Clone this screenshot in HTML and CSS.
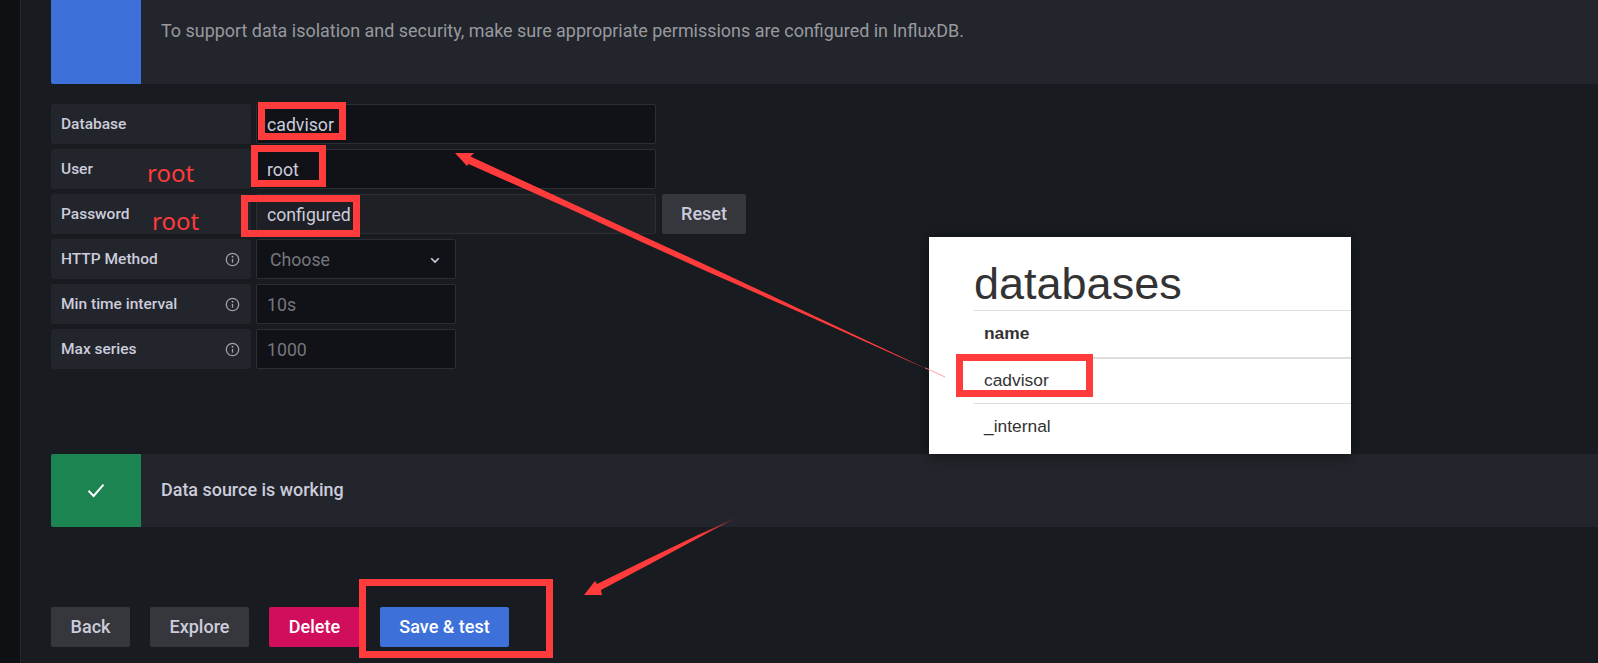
FILE: index.html
```html
<!DOCTYPE html>
<html lang="en">
<head>
<meta charset="utf-8">
<title>InfluxDB data source</title>
<link rel="stylesheet" href="styles.css">
</head>
<body>
<div class="page">
  <aside class="rail"></aside>
  <main class="main">
    <section class="alert alert-info">
      <div class="alert-icon icon-blue"></div>
      <p class="alert-note">To support data isolation and security, make sure appropriate permissions are configured in InfluxDB.</p>
    </section>

    <form class="form">
      <div class="row">
        <div class="label">Database</div>
        <div class="field wide">cadvisor</div>
      </div>
      <div class="row">
        <div class="label">User</div>
        <div class="field wide">root</div>
      </div>
      <div class="row">
        <div class="label">Password</div>
        <div class="field wide locked">configured</div>
        <div class="btn btn-grey btn-reset">Reset</div>
      </div>
      <div class="row">
        <div class="label">HTTP Method
          <svg class="info" viewBox="0 0 16 16"><circle cx="8" cy="8" r="6.6"/><path d="M8 7.4v4"/><circle class="dot" cx="8" cy="5" r="1"/></svg>
        </div>
        <div class="field short select"><span class="hint hint-select">Choose</span>
          <svg class="chev" viewBox="0 0 12 12"><path d="M2.2 4.2 6 8l3.8-3.8"/></svg>
        </div>
      </div>
      <div class="row">
        <div class="label">Min time interval
          <svg class="info" viewBox="0 0 16 16"><circle cx="8" cy="8" r="6.6"/><path d="M8 7.4v4"/><circle class="dot" cx="8" cy="5" r="1"/></svg>
        </div>
        <div class="field short"><span class="hint">10s</span></div>
      </div>
      <div class="row">
        <div class="label">Max series
          <svg class="info" viewBox="0 0 16 16"><circle cx="8" cy="8" r="6.6"/><path d="M8 7.4v4"/><circle class="dot" cx="8" cy="5" r="1"/></svg>
        </div>
        <div class="field short"><span class="hint">1000</span></div>
      </div>
    </form>

    <section class="alert alert-ok">
      <div class="alert-icon icon-green">
        <svg class="check" viewBox="0 0 20 20"><path d="M2.500 10.800 7.600 16 17.500 4.600"/></svg>
      </div>
      <p class="alert-title">Data source is working</p>
    </section>

    <div class="actions">
      <div class="btn btn-grey btn-back">Back</div>
      <div class="btn btn-grey btn-explore">Explore</div>
      <div class="btn btn-red btn-delete">Delete</div>
      <div class="btn btn-blue btn-save">Save &amp; test</div>
    </div>
  </main>

  <div class="card">
    <h2 class="card-title">databases</h2>
    <div class="card-row card-head">name</div>
    <div class="card-row card-first">cadvisor</div>
    <div class="card-row card-last">_internal</div>
  </div>

  <svg class="arrows" viewBox="0 0 1598 663">
    <defs>
      <linearGradient id="fade2" gradientUnits="userSpaceOnUse" x1="700" y1="0" x2="737" y2="0">
        <stop offset="0" stop-color="#ff3b3b"/>
        <stop offset="1" stop-color="#ff3b3b" stop-opacity=".3"/>
      </linearGradient>
    </defs>
    <path class="arrow-fill" d="M455 153H474L470.500 156.500 570 202.500 640 234.700 707 265.500 807 312.500 900 356.300 928 369.600 900 357.300 807 315.500 707 271.500 640 241.200 570 209 468.500 164 467 166Z"/>
    <path class="arrow-tail" d="M925 367.800 945 377"/>
    <path fill="url(#fade2)" d="M584 595H602L601 590 650 564 700 537 737 517.500 700 534 650 558 597 584 595 581Z"/>
  </svg>

  <div class="mark mark-db"></div>
  <div class="mark mark-user"></div>
  <div class="mark mark-pass"></div>
  <div class="mark mark-card"></div>
  <div class="mark mark-save"></div>
  <div class="note note-user">root</div>
  <div class="note note-pass">root</div>
</div>
</body>
</html>
```
FILE: styles.css
```css
* { box-sizing: border-box; }

html, body {
  margin: 0;
  height: 100%;
  overflow: hidden;
}

body {
  background: #181b1f;
  color: #ccccdc;
  font-family: Roboto, "Liberation Sans", sans-serif;
  font-size: 18px;
}

.page {
  position: relative;
  display: flex;
  width: 1598px;
  height: 663px;
  overflow: hidden;
}

.rail {
  flex: none;
  width: 21px;
  background: #0f1013;
  border-right: 1px solid #25272b;
}

.main {
  flex: 1;
  min-width: 0;
  padding-left: 30px;
}

/* alerts */
.alert {
  display: flex;
  background: #22252b;
  border-radius: 0 0 0 2px;
}

.alert-info { height: 84px; }

.alert-ok {
  height: 73px;
  margin-top: 85px;
  align-items: center;
  border-radius: 2px 0 0 2px;
}

.alert-icon {
  flex: none;
  display: flex;
  align-items: center;
  justify-content: center;
  width: 90px;
  align-self: stretch;
}

.icon-blue { background: #3d71d9; border-radius: 0 0 0 2px; }
.icon-green { background: #1b8450; border-radius: 2px 0 0 2px; }

.alert-note {
  margin: 20px 0 0 20px;
  font-size: 17.95px;
  line-height: 21px;
  color: #98999f;
}

.alert-title {
  margin: 0 0 1px 20px;
  font-size: 17.95px;
  font-weight: 500;
  line-height: 22px;
  color: #ccccdc;
}

.check {
  width: 20px;
  height: 20px;
  margin-bottom: 2px;
  fill: none;
  stroke: #fff;
  stroke-width: 2;
}

/* form */
.form {
  display: flex;
  flex-direction: column;
  gap: 5px;
  margin-top: 20px;
}

.row {
  display: flex;
  gap: 5px;
  height: 40px;
}

.label {
  display: flex;
  align-items: center;
  justify-content: space-between;
  flex: none;
  width: 200px;
  padding: 0 11px 0 10px;
  background: #22252b;
  border-radius: 3px;
  font-size: 15.5px;
  font-weight: 500;
  color: #ccccdc;
}

.field {
  display: flex;
  align-items: center;
  flex: none;
  padding: 1px 10px 0;
  background: #111217;
  border: 1px solid #2c2e33;
  border-radius: 2px;
  font-size: 17.7px;
  color: #ccccdc;
}

.wide { width: 400px; }
.short { width: 200px; }
.locked { background: #1e2025; }
.select { justify-content: space-between; padding-right: 14px; }
.hint { color: #75777d; }
.hint-select { padding-left: 3px; }

.info {
  flex: none;
  width: 15px;
  height: 15px;
  fill: none;
  stroke: #a0a1a8;
  stroke-width: 1.4;
}

.info .dot { fill: #a0a1a8; stroke: none; }

.chev {
  width: 12px;
  height: 12px;
  fill: none;
  stroke: #ccccdc;
  stroke-width: 1.6;
}

/* buttons */
.btn {
  display: flex;
  align-items: center;
  justify-content: center;
  flex: none;
  height: 40px;
  padding-bottom: 1px;
  border-radius: 2px;
  font-weight: 500;
}

.btn-grey { background: #35373c; color: #ccccdc; }
.btn-red { background: #d10e5c; color: #fff; }
.btn-blue { background: #3d71d9; color: #fff; }

.btn-reset { width: 84px; margin-left: 1px; }
.btn-back { width: 79px; }
.btn-explore { width: 99px; }
.btn-delete { width: 91px; }
.btn-save { width: 129px; }

.actions {
  display: flex;
  gap: 20px;
  margin-top: 80px;
}

/* pasted screenshot of the InfluxDB admin page */
.card {
  position: absolute;
  left: 929px;
  top: 237px;
  width: 422px;
  height: 217px;
  padding-left: 45px;
  overflow: hidden;
  background: #fff;
  box-shadow: 0 2px 12px rgba(0, 0, 0, .45);
  color: #333;
  font-family: "Liberation Sans", Arial, sans-serif;
}

.card-title {
  height: 74px;
  margin: 0 -1px 0 0;
  padding-top: 17px;
  border-bottom: 1px solid #ddd;
  font-size: 45px;
  font-weight: 400;
  line-height: 60px;
}

.card-row {
  padding-left: 10px;
  font-size: 17.4px;
  line-height: 22px;
}

.card-head {
  height: 48px;
  padding-top: 11px;
  border-bottom: 2px solid #ddd;
  font-weight: 700;
}

.card-first {
  height: 45px;
  padding-top: 10px;
  border-bottom: 1px solid #ddd;
}

.card-last {
  padding-top: 11px;
}

/* red annotations drawn over the screenshot */
.arrows {
  position: absolute;
  inset: 0;
  width: 1598px;
  height: 663px;
  pointer-events: none;
}

.arrow-fill { fill: #ff3b3b; }

.arrow-tail {
  fill: none;
  stroke: #ff8a8a;
  stroke-width: .8;
}

.mark {
  position: absolute;
  border: 7px solid #ff3b3b;
}

.mark-db { left: 258px; top: 102px; width: 88px; height: 38px; }
.mark-user { left: 251px; top: 145px; width: 75px; height: 42px; }
.mark-pass { left: 241px; top: 195px; width: 119px; height: 42px; }
.mark-card { left: 956px; top: 354px; width: 137px; height: 43px; }
.mark-save { left: 359px; top: 579px; width: 194px; height: 79px; }

.note {
  position: absolute;
  font-family: "Noto Sans", sans-serif;
  font-size: 24px;
  line-height: 30px;
  color: #ff3b3b;
}

.note-user { left: 147px; top: 158px; }
.note-pass { left: 152px; top: 206px; }
```
